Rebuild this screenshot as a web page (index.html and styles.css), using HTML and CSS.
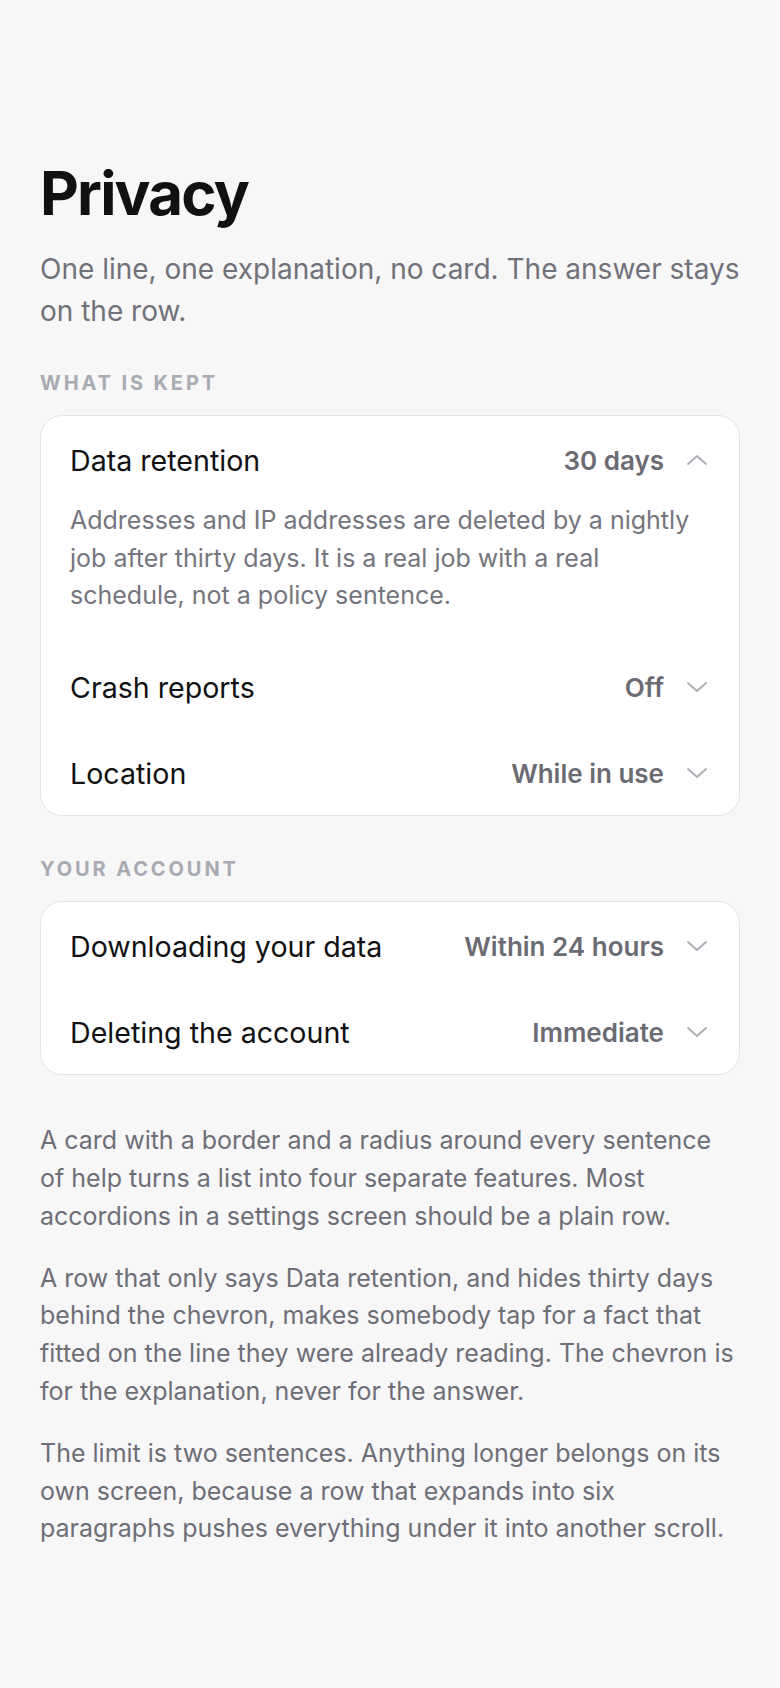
FILE: index.html
```html
<!DOCTYPE html>
<html lang="en">
<head>
<meta charset="utf-8">
<title>Privacy</title>
<link rel="stylesheet" href="styles.css">
</head>
<body>
<main class="page">
  <h1 class="title">Privacy</h1>
  <p class="subtitle">One line, one explanation, no card. The answer stays on the row.</p>

  <section class="group">
    <h2 class="group-label">WHAT IS KEPT</h2>
    <div class="card">
      <div class="item open">
        <div class="row">
          <span class="row-label">Data retention</span>
          <span class="row-value">30 days</span>
          <svg class="chev" viewBox="0 0 22 12" width="22" height="12"><path d="M2 10 L11 2 L20 10"/></svg>
        </div>
        <p class="desc">Addresses and IP addresses are deleted by a nightly job after thirty days. It is a real job with a real schedule, not a policy sentence.</p>
      </div>
      <div class="item">
        <div class="row">
          <span class="row-label">Crash reports</span>
          <span class="row-value">Off</span>
          <svg class="chev" viewBox="0 0 22 12" width="22" height="12"><path d="M2 2 L11 10 L20 2"/></svg>
        </div>
      </div>
      <div class="item">
        <div class="row">
          <span class="row-label">Location</span>
          <span class="row-value">While in use</span>
          <svg class="chev" viewBox="0 0 22 12" width="22" height="12"><path d="M2 2 L11 10 L20 2"/></svg>
        </div>
      </div>
    </div>
  </section>

  <section class="group">
    <h2 class="group-label">YOUR ACCOUNT</h2>
    <div class="card">
      <div class="item">
        <div class="row">
          <span class="row-label">Downloading your data</span>
          <span class="row-value">Within 24 hours</span>
          <svg class="chev" viewBox="0 0 22 12" width="22" height="12"><path d="M2 2 L11 10 L20 2"/></svg>
        </div>
      </div>
      <div class="item">
        <div class="row">
          <span class="row-label">Deleting the account</span>
          <span class="row-value">Immediate</span>
          <svg class="chev" viewBox="0 0 22 12" width="22" height="12"><path d="M2 2 L11 10 L20 2"/></svg>
        </div>
      </div>
    </div>
  </section>

  <div class="notes">
    <p>A card with a border and a radius around every sentence of help turns a list into four separate features. Most accordions in a settings screen should be a plain row.</p>
    <p>A row that only says Data retention, and hides thirty days behind the chevron, makes somebody tap for a fact that fitted on the line they were already reading. The chevron is for the explanation, never for the answer.</p>
    <p>The limit is two sentences. Anything longer belongs on its own screen, because a row that expands into six paragraphs pushes everything under it into another scroll.</p>
  </div>
</main>
</body>
</html>
```

FILE: styles.css
```css
* { box-sizing: border-box; }
html, body { margin: 0; padding: 0; }
body {
  background: #f7f7f8;
  font-family: Inter, "Noto Sans", sans-serif;
  color: #18181b;
  -webkit-font-smoothing: antialiased;
}
.page {
  padding: 160px 40px 80px;
}
.title {
  margin: 0;
  font-size: 60px;
  line-height: 66px;
  font-weight: 700;
  letter-spacing: -0.03em;
  color: #111113;
}
.subtitle {
  margin: 22px 0 0;
  font-size: 28px;
  line-height: 42px;
  color: #71717a;
}
.group { margin-top: 39px; }
.group + .group { margin-top: 41px; }
.group-label {
  margin: 0 0 20px;
  font-size: 20px;
  line-height: 24px;
  font-weight: 700;
  letter-spacing: 0.145em;
  color: #a9abb3;
}
.card {
  background: #fff;
  border: 1px solid #e4e4e7;
  border-radius: 22px;
}
.row {
  display: flex;
  align-items: center;
  height: 86px;
  padding: 2px 31px 0 29px;
}
.row-label {
  flex: 1;
  font-size: 28.6px;
  color: #111113;
}
.row-value {
  font-size: 26px;
  font-weight: 600;
  color: #6b6b73;
}
.chev {
  margin-left: 22px;
  fill: none;
  stroke: #acacb4;
  stroke-width: 1.8;
  stroke-linecap: round;
  stroke-linejoin: round;
}
.desc {
  margin: 0;
  padding: 0 40px 28px 29px;
  font-size: 25px;
  line-height: 37.7px;
  color: #75757e;
}
.notes { margin-top: 47px; }
.notes p {
  margin: 0 0 24.5px;
  font-size: 25px;
  line-height: 37.7px;
  color: #6e6e77;
}
```
